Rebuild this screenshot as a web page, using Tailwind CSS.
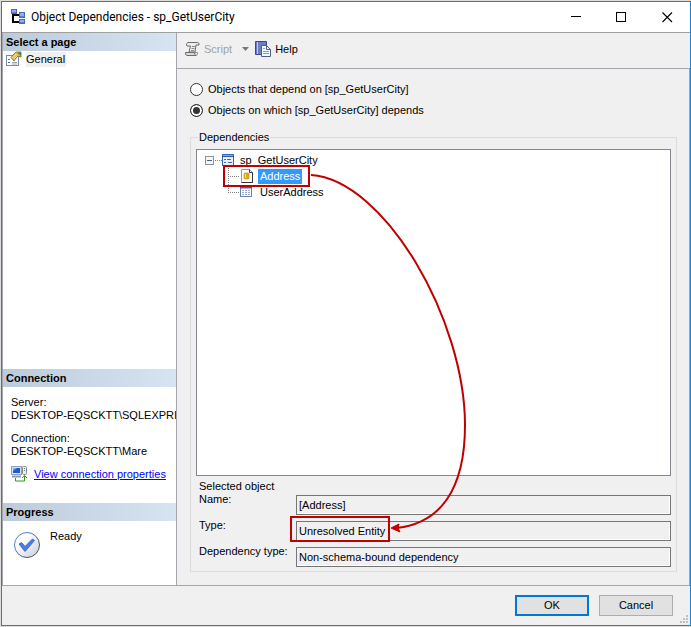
<!DOCTYPE html>
<html lang="en">
<head>
    <meta charset="UTF-8">
    <meta name="viewport" content="width=device-width, initial-scale=1.0">
    <title>Object Dependencies - sp_GetUserCity</title>
    <script src="https://cdn.jsdelivr.net/npm/@tailwindcss/browser@4"></script>
</head>
<body class="relative min-h-screen flex flex-col bg-[#dcdcdc] pt-px pl-px pb-px text-[11px] leading-[13px] text-black font-['Liberation_Sans',Arial,sans-serif]">
    <div class="flex-1 flex flex-col border border-[#1883d7] bg-[#f0f0f0]">
        <!-- title bar -->
        <header class="flex items-center h-[31px] bg-white border-b border-[#a0a0a0] pl-2">
            <svg class="w-4 h-4 mr-[5px]" viewBox="0 0 16 16">
                <path d="M3 4v9h6M3 6h6" fill="none" stroke="#000" stroke-width="2"/>
                <rect x="1.500" y="0.500" width="5" height="4" fill="#8fb0f4" stroke="#4a68b8"/>
                <rect x="9.500" y="3.500" width="5" height="5" fill="#8fb0f4" stroke="#4a68b8"/>
                <rect x="9.500" y="10.500" width="5" height="4" fill="#8fb0f4" stroke="#4a68b8"/>
                <path d="M10 7.500h4M10 13.500h4M2 3.500h4" stroke="#5a80dc"/>
            </svg>
            <h1 class="flex-1 text-[12px] leading-4 font-['Roboto',sans-serif]">Object Dependencies - sp_GetUserCity</h1>
            <div class="flex">
                <button aria-label="Minimize" class="w-[45px] h-7 flex items-center justify-center">
                    <svg class="w-[11px] h-[11px]" viewBox="0 0 11 11"><path d="M0 4.500h10" stroke="#000"/></svg>
                </button>
                <button aria-label="Maximize" class="w-[45px] h-7 flex items-center justify-center">
                    <svg class="w-[11px] h-[11px]" viewBox="0 0 11 11"><rect x="0.500" y="0.500" width="9" height="9" fill="none" stroke="#000"/></svg>
                </button>
                <button aria-label="Close" class="w-[46px] h-7 flex items-center justify-center">
                    <svg class="w-[11px] h-[11px]" viewBox="0 0 11 11"><path d="M0.500 0.500l9.500 9.500M10 0.500l-9.500 9.500" stroke="#000" stroke-width="1.100"/></svg>
                </button>
            </div>
        </header>

        <div class="flex-1 flex border-b border-[#a5a5ad]">
            <!-- left panel -->
            <aside class="w-[175px] shrink-0 flex flex-col bg-white border-x border-[#a5a5ad]">
                <section class="flex-1">
                    <h2 class="h-[18px] px-[3px] leading-[18px] font-bold bg-linear-to-r from-[#bccbdb] to-[#d7e4f2]">Select a page</h2>
                    <div class="flex items-center h-4 pl-[3px]">
                        <svg class="w-4 h-4 mr-1" viewBox="0 0 16 16">
                            <rect x="0.500" y="4.500" width="12" height="10" fill="#fff" stroke="#7c8aa5"/>
                            <path d="M2 8.500h2M2 11.500h2" stroke="#4a70c0"/>
                            <path d="M6 11.500h5M6 13h5" stroke="#9aa4b8"/>
                            <path d="M5 6.500L8 3l2-2h5v5l-3-1-2 2-2 3z" fill="#e8c050" stroke="#76602a" stroke-width="0.800"/>
                            <path d="M11 2l4-1v4z" fill="#4c8a3c"/>
                            <path d="M6 7l4-4M8 8l3-3" stroke="#fbe69c" stroke-width="0.800"/>
                        </svg>
                        <a href="#" class="h-[15px] leading-[15px] pr-px bg-[#f0f0f0]">General</a>
                    </div>
                </section>
                <section class="h-[134px]">
                    <h2 class="h-[18px] px-[3px] leading-[18px] font-bold bg-linear-to-r from-[#bccbdb] to-[#d7e4f2]">Connection</h2>
                    <div class="pl-2 pt-[9px]">
                        <p>Server:</p>
                        <p class="overflow-hidden whitespace-nowrap">DESKTOP-EQSCKTT\SQLEXPRI</p>
                        <p class="mt-[10px]">Connection:</p>
                        <p>DESKTOP-EQSCKTT\Mare</p>
                        <div class="flex items-center mt-2">
                            <svg class="w-4 h-4 mr-[7px]" viewBox="0 0 16 16">
                                <rect x="0.500" y="0.500" width="10" height="8" fill="#d8e2f2" stroke="#8ca4cc"/>
                                <rect x="2" y="2" width="7" height="5" fill="#2458d0"/>
                                <path d="M2 2h4l-4 3z" fill="#7ca4f0"/>
                                <path d="M1 10.500h9" stroke="#8c9ab5" stroke-width="2"/>
                                <rect x="11.500" y="0.500" width="4" height="8" rx="1" fill="#eee" stroke="#888"/>
                                <path d="M13 2.500h1M13 4.500h1" stroke="#777"/>
                                <path d="M4.500 12v3h9V10M11 12l2.500-2.500 2.500 2.500" fill="none" stroke="#2e9a10"/>
                            </svg>
                            <a href="#" class="text-[#0000ff] underline">View connection properties</a>
                        </div>
                    </div>
                </section>
                <section class="h-[82px]">
                    <h2 class="h-[18px] px-[3px] leading-[18px] font-bold bg-linear-to-r from-[#bccbdb] to-[#d7e4f2]">Progress</h2>
                    <div class="flex pl-[10px] pt-[9px]">
                        <svg class="w-7 h-7 mr-[9px] mt-px" viewBox="0 0 28 28">
                            <defs>
                                <linearGradient id="disc" x1="0" y1="0" x2="1" y2="1">
                                    <stop offset="0.300" stop-color="#fff"/>
                                    <stop offset="1" stop-color="#c8ccd4"/>
                                </linearGradient>
                                <linearGradient id="rim" x1="0" y1="0" x2="1" y2="1">
                                    <stop offset="0" stop-color="#5c94e4"/>
                                    <stop offset="1" stop-color="#34445c"/>
                                </linearGradient>
                            </defs>
                            <circle cx="14" cy="14" r="12.500" fill="url(#disc)" stroke="url(#rim)"/>
                            <path d="M6 13l2.500-1.500 3.500 4L19.500 8l2 1.500L12 20.500z" fill="#4680ec" stroke="#2c58b4" stroke-width="0.800"/>
                        </svg>
                        <p>Ready</p>
                    </div>
                </section>
            </aside>

            <main class="flex-1 flex flex-col">
                <!-- toolbar -->
                <div class="flex items-center h-9 pl-[7px] pb-[3px] border-b border-[#a5a5ad]">
                    <button disabled class="flex items-center text-[#a0a0a0]">
                        <svg class="w-4 h-4 mr-1" viewBox="0 0 16 16">
                            <path d="M4 1.500h9.500q2 0 1.500 2.500h-3L11 11H5L6.500 5H3Q1 3 4 1.500z" fill="#eee" stroke="#6c6c6c"/>
                            <path d="M1.500 11.500h9q0 2 1.500 3H3q-2.500-1-1.500-3z" fill="#d8d8d8" stroke="#6c6c6c"/>
                            <path d="M12 14.500q2-.5 1.500-3H11M8 5.500h3M7.500 7.500h3M7 9.500h3" fill="none" stroke="#8c8c8c"/>
                        </svg>
                        Script
                        <svg class="w-[7px] h-1 ml-[10px]" viewBox="0 0 7 4"><path d="M0 0h7L3.500 4z" fill="#777"/></svg>
                    </button>
                    <button class="flex items-center ml-[6px]">
                        <svg class="w-4 h-4 mr-1" viewBox="0 0 16 16">
                            <path d="M0.500 0.500h11v13h-11z" fill="#6c7cc8" stroke="#3c488c"/>
                            <path d="M2.500 1v12" stroke="#c4ccf0"/>
                            <path d="M6.500 4.500h5l4 4v7h-9z" fill="#f4f8ff" stroke="#4a6088"/>
                            <path d="M11.500 4.500v4h4" fill="none" stroke="#4a6088"/>
                            <path d="M8 10.500h6M8 12.500h6M8 7.500h2" stroke="#7c9cd4"/>
                        </svg>
                        Help
                    </button>
                </div>

                <div class="flex-1 flex flex-col pt-[10px] pl-[13px] pr-3 pb-[13px] border-r border-[#a5a5ad]">
                    <div class="flex items-center h-[21px]">
                        <input type="radio" name="direction" id="dependents" class="appearance-none w-[13px] h-[13px] rounded-full border border-[#333] bg-white checked:bg-[#333] checked:shadow-[inset_0_0_0_2px_#fff]">
                        <label for="dependents" class="ml-[5px]">Objects that depend on [sp_GetUserCity]</label>
                    </div>
                    <div class="flex items-center h-[21px]">
                        <input type="radio" name="direction" id="depends" checked class="appearance-none w-[13px] h-[13px] rounded-full border border-[#333] bg-white checked:bg-[#333] checked:shadow-[inset_0_0_0_2px_#fff]">
                        <label for="depends" class="ml-[5px]">Objects on which [sp_GetUserCity] depends</label>
                    </div>

                    <fieldset class="flex-1 mt-[10px] min-w-0 border border-[#dcdcdc] px-[5px] pb-1">
                        <legend class="ml-[2px] px-px">Dependencies</legend>
                        <div class="flex flex-col h-full">
                            <div class="flex-1 mt-[5px] bg-white border border-[#828790] pt-[2px] pl-2">
                                <ul>
                                    <li class="flex items-center h-4">
                                        <svg class="w-[17px] h-4" viewBox="0 0 17 16">
                                            <rect x="0.500" y="4.500" width="8" height="8" fill="#f6f6f6" stroke="#919191"/>
                                            <path d="M2 8.500h5" stroke="#4060a0"/>
                                            <path d="M10 8.500h7" stroke="#808080" stroke-dasharray="1 1"/>
                                        </svg>
                                        <svg class="w-3 h-3 mr-[6px]" viewBox="0 0 12 12">
                                            <rect x="0.500" y="0.500" width="11" height="11" fill="#e8f0fc" stroke="#3868b8"/>
                                            <path d="M1 1.500h10" stroke="#7ca8ec"/>
                                            <path d="M0 2.500h12" stroke="#2c58b0"/>
                                            <path d="M2 5.500h2M5 5.500h4M2 8.500h2M6 8.500h4" stroke="#3868b8"/>
                                        </svg>
                                        <span>sp_GetUserCity</span>
                                    </li>
                                    <li class="flex items-center h-4 pl-[23px]">
                                        <svg class="w-3 h-4" viewBox="0 0 12 16">
                                            <path d="M0.500 0v16M0 8.500h12" fill="none" stroke="#808080" stroke-dasharray="1 1"/>
                                        </svg>
                                        <svg class="w-[14px] h-4 mr-1" viewBox="0 0 14 16">
                                            <path d="M1.500 1.500h8l3 3v10h-11z" fill="#fff" stroke="#999"/>
                                            <path d="M9.500 1.500v3h3v10h-11" fill="none" stroke="#333"/>
                                            <rect x="4" y="5" width="5" height="6" rx="1" fill="#e0a820" stroke="#b07810" stroke-width="0.500"/>
                                            <path d="M5.500 6v4" stroke="#fbe08c"/>
                                        </svg>
                                        <span class="h-[15px] leading-[15px] px-[2px] bg-[#3399ff] text-white">Address</span>
                                    </li>
                                    <li class="flex items-center h-4 pl-[23px]">
                                        <svg class="w-3 h-4" viewBox="0 0 12 16">
                                            <path d="M0.500 0v9M0 8.500h12" fill="none" stroke="#808080" stroke-dasharray="1 1"/>
                                        </svg>
                                        <svg class="w-3 h-3 mr-2" viewBox="0 0 12 12">
                                            <rect x="0.500" y="0.500" width="11" height="10" fill="#fff" stroke="#6c84b4"/>
                                            <path d="M0 1.500h12" stroke="#3c64b4" stroke-width="2"/>
                                            <path d="M2 4.500h8M2 6.500h8M2 8.500h8" stroke="#98acd4" stroke-dasharray="2 1"/>
                                        </svg>
                                        <span>UserAddress</span>
                                    </li>
                                </ul>
                            </div>
                            <div class="pl-[3px]">
                                <h3 class="mt-1">Selected object</h3>
                                <div class="flex h-[26px]">
                                    <label for="name" class="w-[97px]">Name:</label>
                                    <input id="name" readonly value="[Address]" class="flex-1 min-w-0 h-5 mt-[2px] px-[2px] border border-[#767676] bg-[#f0f0f0] shadow-[inset_-1px_-1px_0_#fff]">
                                </div>
                                <div class="flex h-[26px]">
                                    <label for="type" class="w-[97px]">Type:</label>
                                    <input id="type" readonly value="Unresolved Entity" class="flex-1 min-w-0 h-5 mt-[2px] px-[2px] border border-[#767676] bg-[#f0f0f0] shadow-[inset_-1px_-1px_0_#fff]">
                                </div>
                                <div class="flex h-[22px]">
                                    <label for="deptype" class="w-[97px]">Dependency type:</label>
                                    <input id="deptype" readonly value="Non-schema-bound dependency" class="flex-1 min-w-0 h-5 mt-[2px] px-[2px] border border-[#767676] bg-[#f0f0f0] shadow-[inset_-1px_-1px_0_#fff]">
                                </div>
                            </div>
                        </div>
                    </fieldset>
                </div>
            </main>
        </div>

        <!-- dialog buttons -->
        <footer class="flex items-start justify-end h-[39px] pt-[9px] gap-[10px]">
            <button class="w-[74px] h-[21px] leading-[17px] bg-[#e1e1e1] border-2 border-[#0078d7]">OK</button>
            <button class="w-[74px] h-[21px] leading-[19px] bg-[#e1e1e1] border border-[#adadad]">Cancel</button>
            <svg class="w-2 h-2 self-end -ml-[3px] mr-[2px] mb-[2px]" viewBox="0 0 8 8" fill="#bfbfbf">
                <path d="M6 0h2v2H6zM3 3h2v2H3zM6 3h2v2H6zM0 6h2v2H0zM3 6h2v2H3zM6 6h2v2H6z"/>
            </svg>
        </footer>
    </div>

    <!-- callouts -->
    <svg class="absolute left-0 top-0 w-[480px] h-[560px] pointer-events-none" viewBox="0 0 480 560" fill="none" stroke="#c00000" stroke-width="2">
        <rect x="224" y="166" width="85" height="20"/>
        <rect x="291" y="517" width="98" height="24"/>
        <path d="M311 175C385 180 465 320 465 425C465 490 440 523 397 528"/>
        <path d="M391 528l8-4-1 4 2 4z" fill="#c00000" stroke-width="1"/>
    </svg>
</body>
</html>
